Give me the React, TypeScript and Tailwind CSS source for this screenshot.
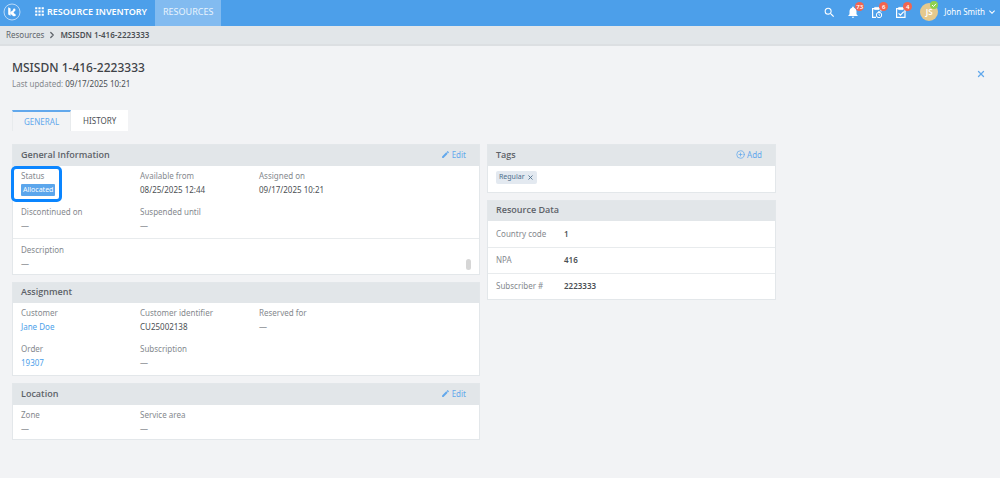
import type { ReactNode } from "react";
import { MdApps, MdEdit, MdKeyboardArrowDown, MdNotifications, MdSearch } from "react-icons/md";
import { ChevronRight, CirclePlus, X } from "lucide-react";

type FieldProps = { label: string; children?: ReactNode };

function Logo() {
  return (
    <svg viewBox="0 0 18 18" className="size-[18px]" fill="none" aria-hidden="true">
      <circle cx="9" cy="9" r="8" stroke="#c6e0f9" strokeWidth="0.9" />
      <path d="M5.2 4.2l2.4 1.3v7.2l-2.4-1.2z" fill="#fff" />
      <path d="M7.2 9.2l3-2.3 2.4.4-2.1 2.3 2.2 3-2.4.6-3.1-2.6z" fill="#fff" />
      <circle cx="11.2" cy="6.8" r="1.2" fill="#fff" />
      <circle cx="11.4" cy="12" r="1.2" fill="#fff" />
    </svg>
  );
}

function Clipboard({ clock = false }: { clock?: boolean }) {
  return (
    <svg viewBox="0 0 12 13" className="h-[13px] w-3 shrink-0" fill="none" stroke="#fff" strokeWidth="1.2" aria-hidden="true">
      <path d="M5 11.4H1.6V2.6H10v3" />
      <path d="M3.6 1.4h4.4v2.2H3.6z" fill="#fff" strokeWidth="0.6" />
      {clock ? (
        <>
          <circle cx="8" cy="9" r="2.7" strokeWidth="1" />
          <path d="M8 7.4V9l.9.6M7 5.6h2" strokeWidth="0.8" />
        </>
      ) : (
        <path d="M5 11.4h5V5M3.6 7.4l1.8 1.8 3.4-3.6" />
      )}
    </svg>
  );
}

function HeaderAction({ label, count, children }: { label: string; count: string; children: ReactNode }) {
  return (
    <button type="button" aria-label={label} className="relative flex h-4 w-3 items-center justify-center">
      {children}
      <span className="absolute -top-0.5 left-2 flex size-[9px] items-center justify-center rounded-full bg-[#f2654f] text-[6px] leading-none font-semibold text-white">
        {count}
      </span>
    </button>
  );
}

function Field({ label, children }: FieldProps) {
  return (
    <div className="flex flex-col gap-0.5">
      <dt className="leading-3 text-[#85898e]">{label}</dt>
      <dd className="leading-3 text-[#4b4f54]">{children ?? <span className="text-[#85898e]">—</span>}</dd>
    </div>
  );
}

function Panel({ title, action, children }: { title: string; action?: ReactNode; children: ReactNode }) {
  return (
    <section className="border border-[#e3e7ea] bg-white">
      <header className={`flex items-center justify-between bg-[#e2e6e9] pr-[13px] pb-0.5 pl-2 ${action ? "h-[21px]" : "h-5"}`}>
        <h2 className="font-['Open_Sans','Noto_Sans',sans-serif] text-[9px] font-semibold text-[#5d6268]">{title}</h2>
        {action}
      </header>
      {children}
    </section>
  );
}

function EditButton() {
  return (
    <button type="button" className="flex items-center gap-0.5 text-[#62a8ec]">
      <MdEdit className="size-[9px]" />
      Edit
    </button>
  );
}

const resourceData = [
  { label: "Country code", value: "1" },
  { label: "NPA", value: "416" },
  { label: "Subscriber #", value: "2223333" },
];

export default function App() {
  return (
    <div className="min-h-screen bg-[#f2f3f5] font-['Noto_Sans','Open_Sans',sans-serif] text-[8px]">
      <header className="flex h-[26px] items-stretch bg-[#4c9fea] pr-0.5 pl-[3px] text-[9px] text-white">
        <a href="#home" aria-label="Home" className="flex items-center pb-[3px]">
          <Logo />
        </a>
        <a href="#inventory" className="ml-3 flex items-center gap-px pb-[3px] font-semibold">
          <MdApps className="size-[13px]" />
          RESOURCE INVENTORY
        </a>
        <a href="#resources" className="ml-2 flex items-center bg-[#82bbf0] px-2 pb-[3px] text-[#e8f3fd]">
          RESOURCES
        </a>
        <div className="ml-auto flex items-center gap-3 pb-0.5">
          <button type="button" aria-label="Search" className="-mr-px">
            <MdSearch className="size-[13px]" />
          </button>
          <HeaderAction label="Notifications" count="73">
            <MdNotifications className="size-[14px] shrink-0" />
          </HeaderAction>
          <HeaderAction label="Scheduled tasks" count="6">
            <Clipboard clock />
          </HeaderAction>
          <HeaderAction label="Tasks" count="4">
            <Clipboard />
          </HeaderAction>
          <button type="button" className="ml-px flex items-center text-[8px]">
            <span className="relative mr-1.5 flex size-[18px] items-center justify-center rounded-full bg-[#e5c98d] font-semibold">
              JS
              <span className="absolute -top-0.5 right-0 flex size-2 items-center justify-center rounded-full bg-[#8fd14f]">
                <svg viewBox="0 0 8 8" className="size-2" fill="none" stroke="#fff">
                  <path d="M2 4l1.5 1.5L6 2.8" />
                </svg>
              </span>
            </span>
            John Smith
            <MdKeyboardArrowDown className="ml-px size-3" />
          </button>
        </div>
      </header>

      <nav aria-label="Breadcrumb" className="flex h-5 items-center gap-[3px] border-b-2 border-[#dcdfe2] bg-[#e2e6e9] px-1.5 text-[#5f646a]">
        <a href="#resources">Resources</a>
        <ChevronRight className="size-2.5" strokeWidth={3} />
        <span className="font-semibold text-[#4b4f54]">MSISDN 1-416-2223333</span>
      </nav>

      <main className="px-3 pt-[13px] pb-4">
        <div className="flex items-start justify-between">
          <div>
            <h1 className="font-['Noto_Sans','Open_Sans',sans-serif] text-[12px] leading-[18px] font-medium text-[#3e4247]">
              MSISDN 1-416-2223333
            </h1>
            <p className="leading-[14px] text-[#85898e]">
              Last updated: <span className="text-[#4b4f54]">09/17/2025 10:21</span>
            </p>
          </div>
          <button type="button" aria-label="Close" className="mt-2.5 mr-0.5 text-[#62a8ec]">
            <X className="size-2.5" strokeWidth={3} />
          </button>
        </div>

        <div role="tablist" className="mt-[19px] flex h-[21px]">
          <button type="button" role="tab" aria-selected="true" className="border-x border-t-2 border-x-[#e8ebed] border-t-[#62a8ec] px-[11px] text-[#62a8ec]">
            GENERAL
          </button>
          <button type="button" role="tab" aria-selected="false" className="bg-white px-3 text-[#4b4f54]">
            HISTORY
          </button>
        </div>

        <div className="mt-[13px] grid grid-cols-[468fr_289fr_205fr] items-start gap-[7px]">
          <div className="flex flex-col gap-[7px]">
            <Panel title="General Information" action={<EditButton />}>
              <dl className="grid h-[73px] grid-cols-[119fr_119fr_212fr] content-start gap-y-[10px] border-b border-[#e8ebed] px-2 pt-1">
                <div className="relative">
                  <Field label="Status">
                    <span className="block w-fit rounded-[1px] bg-[#5ba6ec] px-0.5 text-[7px] text-white">Allocated</span>
                  </Field>
                  <span className="absolute -top-1 -left-2.5 h-9 w-[51px] rounded-[5px] border-3 border-[#0a85ff]" />
                </div>
                <Field label="Available from">08/25/2025 12:44</Field>
                <Field label="Assigned on">09/17/2025 10:21</Field>
                <Field label="Discontinued on" />
                <Field label="Suspended until" />
              </dl>
              <div className="flex h-[35px] items-end justify-between px-2 pb-1">
                <dl>
                  <Field label="Description" />
                </dl>
                <span className="h-[11px] w-[5px] rounded-full bg-[#d6d6d6]" />
              </div>
            </Panel>

            <Panel title="Assignment">
              <dl className="grid h-[72px] grid-cols-[119fr_119fr_212fr] content-start gap-y-[10px] px-2 pt-1">
                <Field label="Customer">
                  <a href="#customer" className="text-[#4c9fea]">Jane Doe</a>
                </Field>
                <Field label="Customer identifier">CU25002138</Field>
                <Field label="Reserved for" />
                <Field label="Order">
                  <a href="#order" className="text-[#4c9fea]">19307</a>
                </Field>
                <Field label="Subscription" />
              </dl>
            </Panel>

            <Panel title="Location" action={<EditButton />}>
              <dl className="grid h-[34px] grid-cols-[119fr_119fr_212fr] content-start px-2 pt-1">
                <Field label="Zone" />
                <Field label="Service area" />
              </dl>
            </Panel>
          </div>

          <div className="flex flex-col gap-[7px]">
            <Panel
              title="Tags"
              action={
                <button type="button" className="flex items-center gap-0.5 text-[#62a8ec]">
                  <CirclePlus className="size-[9px]" />
                  Add
                </button>
              }
            >
              <div className="flex h-[26px] items-start px-2 pt-[5px]">
                <span className="flex h-[13px] items-center gap-0.5 rounded-[2px] bg-[#e3e9f0] px-[3px] text-[7px] text-[#4d6f8c]">
                  Regular
                  <button type="button" aria-label="Remove Regular">
                    <X className="size-[7px]" strokeWidth={3} />
                  </button>
                </span>
              </div>
            </Panel>

            <Panel title="Resource Data">
              <table className="w-full text-left">
                <tbody>
                  {resourceData.map((row) => (
                    <tr key={row.label} className="h-[26px] border-b border-[#e8ebed] last:border-b-0">
                      <th scope="row" className="w-[76px] pl-2 font-normal text-[#85898e]">{row.label}</th>
                      <td className="font-semibold text-[#4b4f54]">{row.value}</td>
                    </tr>
                  ))}
                </tbody>
              </table>
            </Panel>
          </div>
        </div>
      </main>
    </div>
  );
}
